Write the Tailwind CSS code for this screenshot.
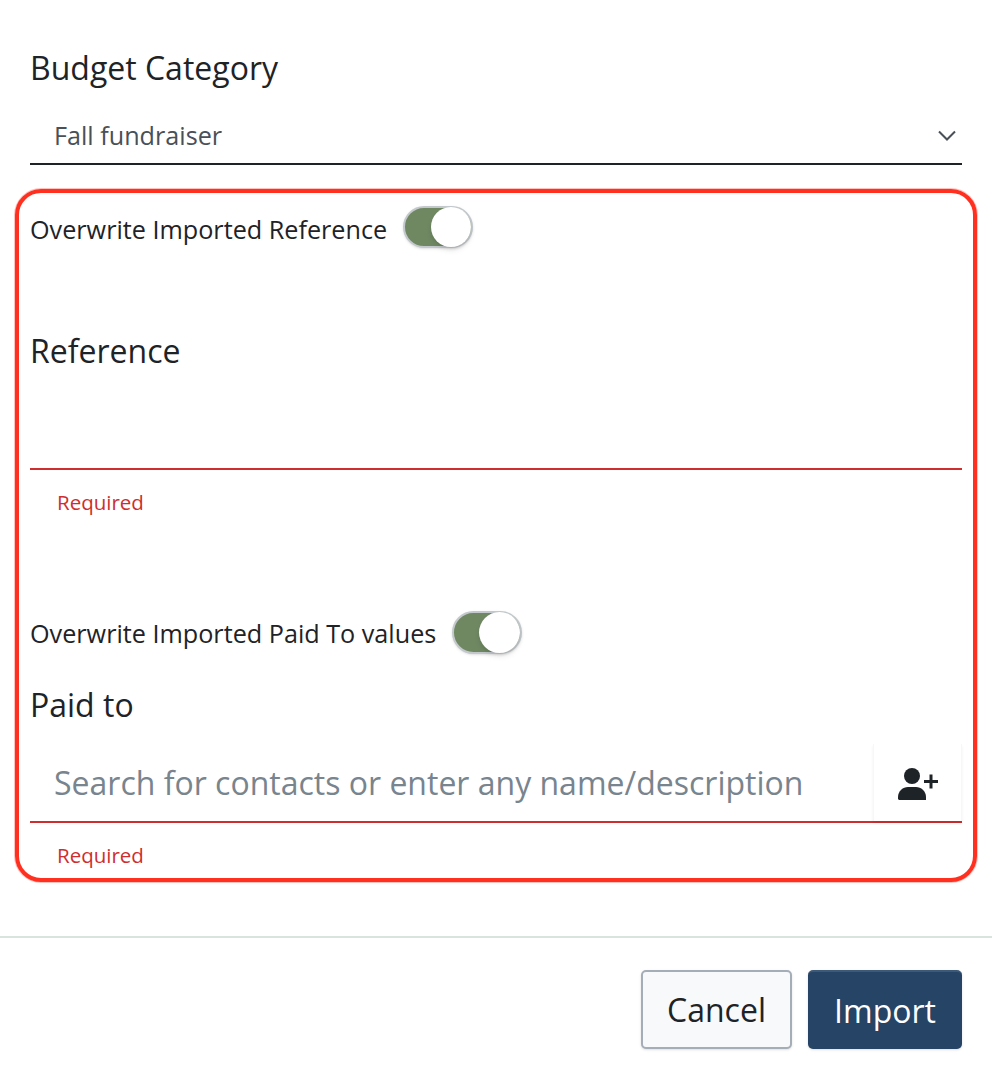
<!DOCTYPE html>
<html lang="en">

<head>
    <meta charset="UTF-8">
    <meta name="viewport" content="width=device-width, initial-scale=1.0">
    <title>Import options</title>
    <script src="https://cdn.jsdelivr.net/npm/@tailwindcss/browser@4"></script>
</head>

<body class="bg-white font-['Open_Sans',sans-serif] text-[#1e2327]">
    <div class="flex flex-col h-[1078px] w-[992px] overflow-hidden">

        <!-- budget category -->
        <div class="px-[30px] pt-[46px]">
            <label class="block text-[32px] leading-[44px]">Budget Category</label>
            <div class="flex items-center justify-between mt-[18px] h-[57px] pl-[24px] pr-[6px] border-b-2 border-[#1e2327]">
                <span class="text-[25.2px] text-[#495057]">Fall fundraiser</span>
                <svg class="w-[18px] h-[11px]" viewBox="0 0 18 11" fill="none" stroke="#495057" stroke-width="2">
                    <path d="M1 1.500l8 8 8-8" />
                </svg>
            </div>
        </div>

        <!-- highlighted area -->
        <div class="mt-[24px] mx-[15px] h-[693px] px-[11px] border-4 border-[#ff3020] rounded-[26px] ring-1 ring-[#ff3020]/30">
            <div class="flex items-center gap-[16px] mt-[13px] h-[42px]">
                <span class="pt-[5px] text-[25.2px]">Overwrite Imported Reference</span>
                <span class="flex items-center justify-end w-[70px] h-[42px] rounded-full bg-[#6f8862] border-2 border-[#c3c8cc] shadow-sm">
                    <span class="w-[40px] h-[40px] rounded-full bg-white shadow-md"></span>
                </span>
            </div>

            <label class="block mt-[81px] text-[32px] leading-[44px]">Reference</label>
            <div class="mt-[36px] h-[61px] border-b-2 border-[#cf2e2e]"></div>
            <p class="mt-[16px] pl-[27px] text-[20.500px] leading-[32px] text-[#cf2e2e]">Required</p>

            <div class="flex items-center gap-[16px] mt-[93px] h-[42px]">
                <span class="pt-[4px] text-[25.2px]">Overwrite Imported Paid To values</span>
                <span class="flex items-center justify-end w-[70px] h-[43px] rounded-full bg-[#6f8862] border-2 border-[#c3c8cc] shadow-sm">
                    <span class="w-[41px] h-[41px] rounded-full bg-white shadow-md"></span>
                </span>
            </div>

            <label class="block mt-[30px] text-[32px] leading-[44px]">Paid to</label>
            <div class="flex items-stretch mt-[17px] h-[79px] border-b-2 border-[#cf2e2e]">
                <span class="flex-1 flex items-center pl-[24px] text-[32px] text-[#78848e] whitespace-nowrap">Search for contacts or enter any name/description</span>
                <span class="flex items-center justify-center w-[89px] border-x border-[#f6f7f8] shadow-[0_2px_3px_rgba(0,0,0,0.06)]">
                    <svg class="w-[40px] h-[32px] mt-[2px]" viewBox="0 0 40 32" fill="#1e2327">
                        <circle cx="14" cy="8" r="8" />
                        <path d="M0 31v-2c0-6 5-10 10-10h8c5 0 10 4 10 10v3H1z" />
                        <path d="M33 6.500v14M26 13.500h14" fill="none" stroke="#1e2327" stroke-width="3" />
                    </svg>
                </span>
            </div>
            <p class="mt-[16px] pl-[27px] text-[20.500px] leading-[32px] text-[#cf2e2e]">Required</p>
        </div>

        <!-- footer -->
        <div class="flex justify-end gap-[16px] mt-[54px] px-[30px] pt-[32px] border-t-2 border-[#d8e4dc]">
            <button class="w-[151px] h-[79px] rounded-[5px] bg-[#f8f9fa] border-2 border-[#a5adb6] text-[32px] text-[#1e2327] shadow-sm">Cancel</button>
            <button class="w-[154px] h-[79px] rounded-[5px] bg-[#264465] border-t-2 border-[#3d5978] text-[32px] text-white shadow-sm">Import</button>
        </div>
    </div>
</body>

</html>
